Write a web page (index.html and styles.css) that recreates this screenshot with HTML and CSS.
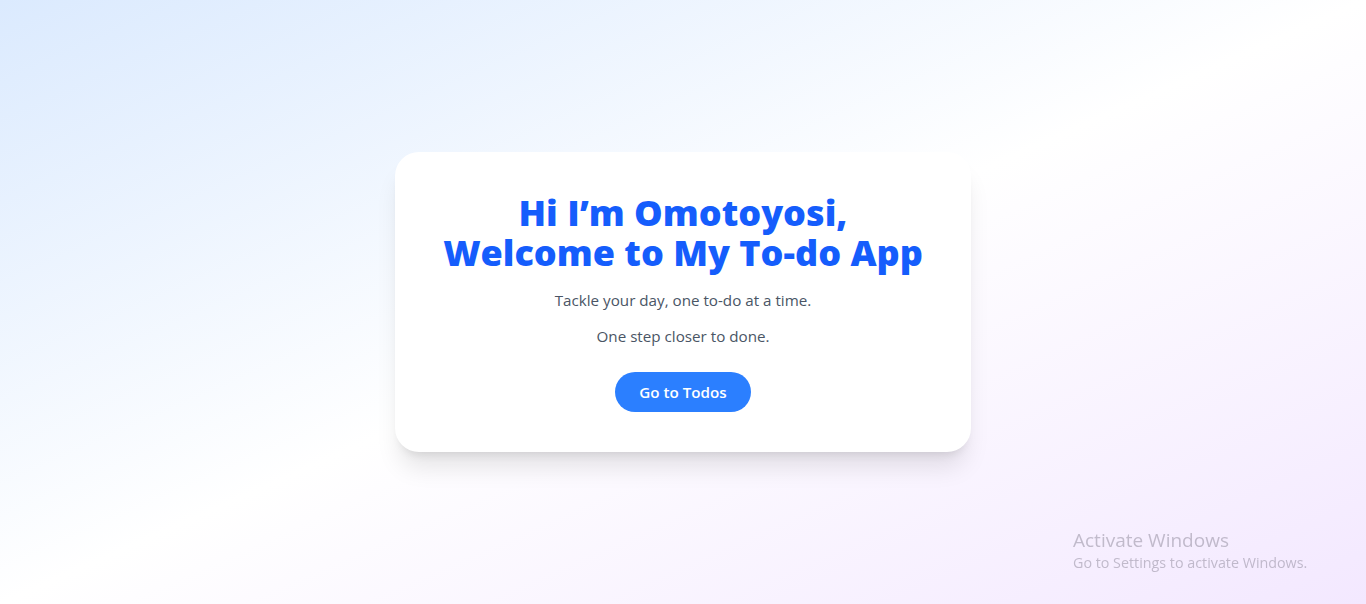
FILE: index.html
```html
<!DOCTYPE html>
<html lang="en">
<head>
<meta charset="utf-8">
<title>My To-do App</title>
<link rel="stylesheet" href="styles.css">
</head>
<body>
<main class="page">
  <section class="card">
    <h1 class="title">Hi I’m Omotoyosi,<br>Welcome to My To-do App</h1>
    <p class="lead">Tackle your day, one to-do at a time.</p>
    <p class="lead lead-second">One step closer to done.</p>
    <a class="btn" href="#">Go to Todos</a>
  </section>
</main>
<div class="watermark">
  <div class="wm-title">Activate Windows</div>
  <div class="wm-sub">Go to Settings to activate Windows.</div>
</div>
</body>
</html>
```
FILE: styles.css
```css
* { box-sizing: border-box; }
html, body { margin: 0; padding: 0; }
body {
  font-family: "Open Sans", "Noto Sans", "Liberation Sans", sans-serif;
  min-height: 100vh;
  background: linear-gradient(to bottom right, #dbeafe 0%, #ffffff 50%, #f3e8ff 100%);
}
.page {
  min-height: 100vh;
  display: flex;
  align-items: center;
  justify-content: center;
}
.card {
  width: 576px;
  background: #ffffff;
  border-radius: 24px;
  padding: 41px 40px 40px;
  text-align: center;
  box-shadow: 0 20px 25px -5px rgba(0,0,0,0.1), 0 8px 10px -6px rgba(0,0,0,0.1);
}
.title {
  margin: 0;
  font-size: 36px;
  line-height: 40px;
  font-weight: 800;
  color: #155dfc;
}
.lead {
  margin: 15px 0 0;
  font-size: 15.2px;
  line-height: 24px;
  color: #4a5565;
}
.lead-second { margin-top: 12px; }
.btn {
  display: inline-block;
  margin-top: 24px;
  padding: 8px 24px;
  border-radius: 9999px;
  background: #2b7fff;
  color: #ffffff;
  font-weight: 600;
  font-size: 15.2px;
  line-height: 24px;
  text-decoration: none;
}
.watermark {
  position: fixed;
  left: 1073px;
  top: 528px;
  color: rgba(120, 115, 130, 0.42);
  pointer-events: none;
}
.wm-title { font-size: 19px; line-height: 24px; }
.wm-sub { font-size: 14.3px; line-height: 21px; }
```
